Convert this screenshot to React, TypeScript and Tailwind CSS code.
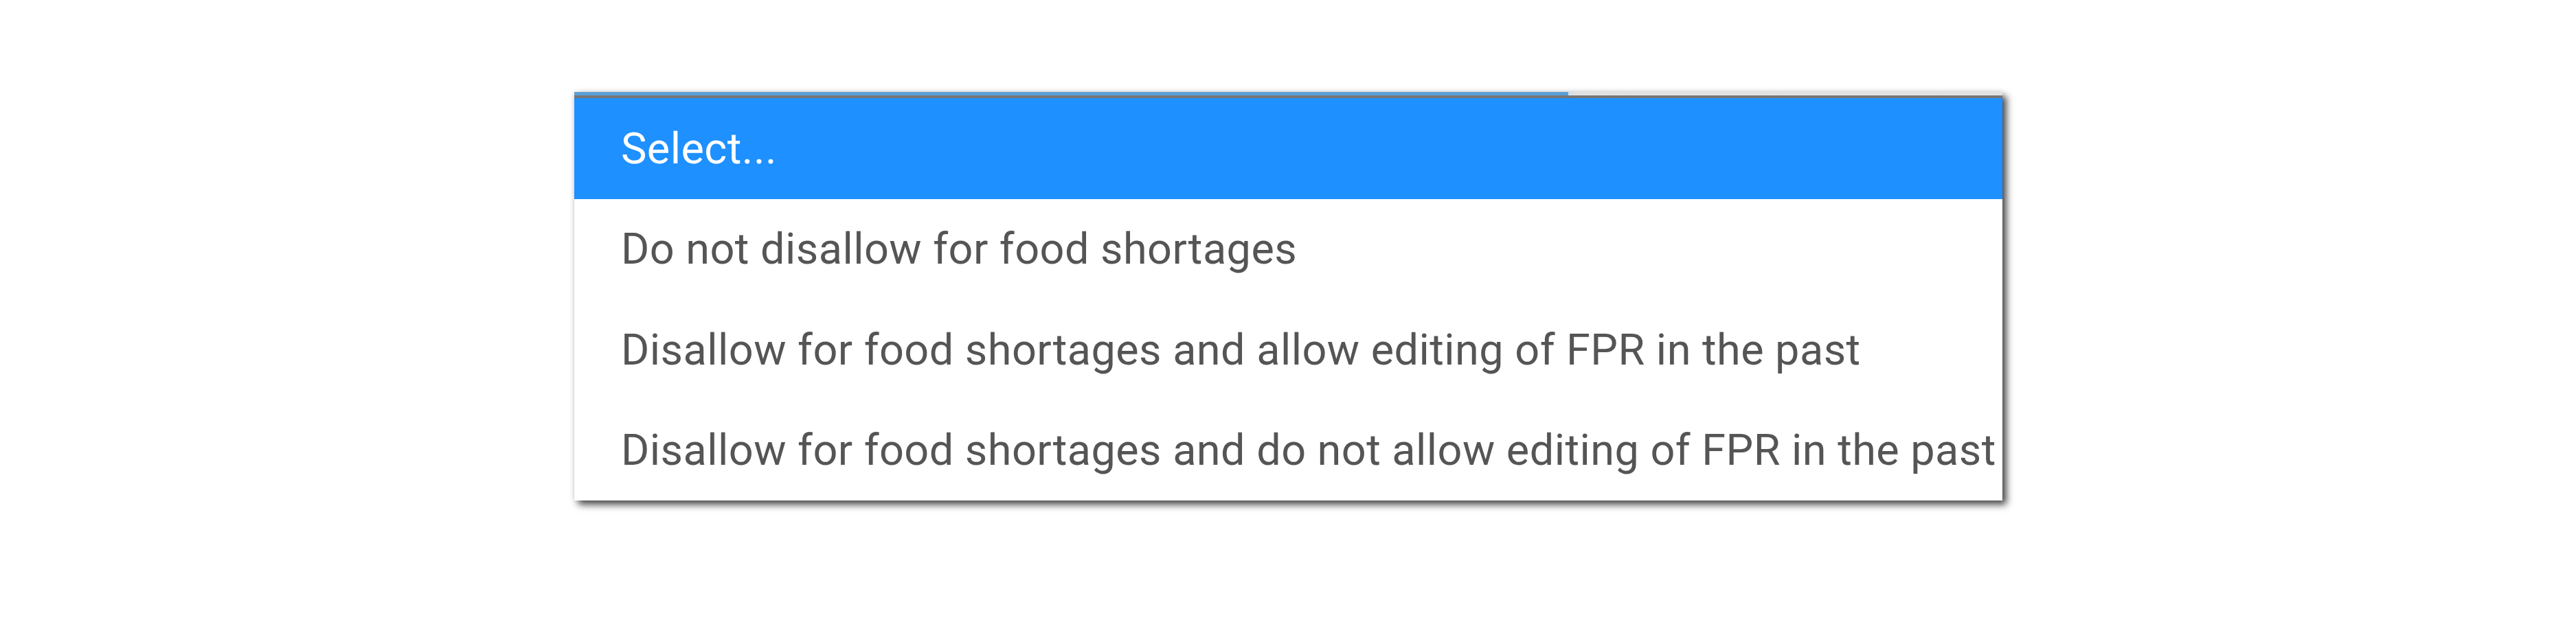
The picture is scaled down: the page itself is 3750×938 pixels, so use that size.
const OPTIONS = [
  "Select...",
  "Do not disallow for food shortages",
  "Disallow for food shortages and allow editing of FPR in the past",
  "Disallow for food shortages and do not allow editing of FPR in the past",
]

export default function App() {
  return (
    <div
      className="w-full h-[938px] bg-white pt-[134px] pl-[836px]"
      style={{ fontFamily: "Roboto, 'Noto Sans', Arial, sans-serif" }}
    >
      <div className="w-[2079px] shadow-[6px_6px_10px_rgba(0,0,0,0.7),0_0_8px_rgba(0,0,0,0.12)]">
        {/* strip of the control sitting behind the list */}
        <div className="flex h-[5px]">
          <div className="w-[1447px] bg-[#5a9fd6]" />
          <div className="flex-1 bg-gradient-to-r from-[#cfdeea] to-[#e2e2e2] to-[2%]" />
        </div>
        <ul className="border-t-4 border-[#767676] bg-white">
          {OPTIONS.map((label, i) => (
            <li
              key={label}
              className={
                i === 0
                  ? "h-[146.5px] flex items-center pl-[68px] text-[63px] tracking-[0.45px] leading-none whitespace-nowrap bg-[#1e90ff] text-white"
                  : "h-[146.5px] flex items-center pl-[68px] text-[63px] tracking-[0.45px] leading-none whitespace-nowrap bg-white text-[#555555]"
              }
            >
              {label}
            </li>
          ))}
        </ul>
      </div>
    </div>
  )
}
